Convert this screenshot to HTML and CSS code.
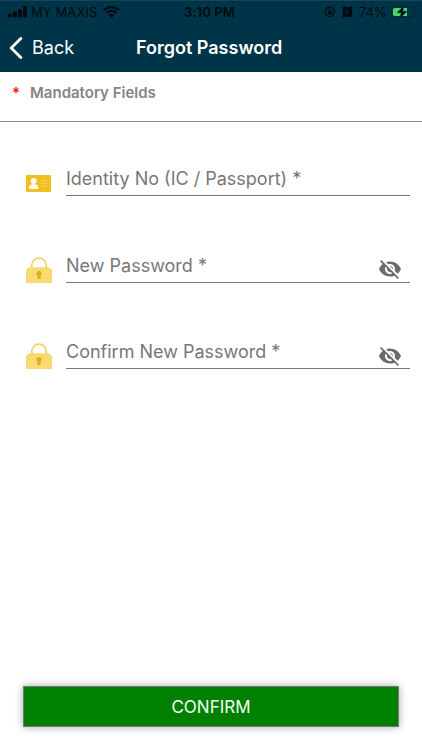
FILE: index.html
```html
<!DOCTYPE html>
<html lang="en">
<head>
<meta charset="utf-8">
<title>Forgot Password</title>
<link rel="stylesheet" href="styles.css">
</head>
<body>
<svg class="defs" width="0" height="0" aria-hidden="true">
  <symbol id="lock" viewBox="0 0 26 26">
    <path d="M5.8 12V8.3a7.2 7.2 0 0 1 14.4 0V12" fill="none" stroke="#efce58" stroke-width="1.5"/>
    <path d="M.5 25.5V15q0-4.2 4.3-4.2h16.4q4.3 0 4.3 4.2v10.500z" fill="#f8da70" stroke="#f3d263" stroke-width=".8"/>
    <path d="M13 14a2.700 2.700 0 0 0-1.500 4.900V22h3v-3.100A2.700 2.700 0 0 0 13 14z" fill="#dfae16"/>
  </symbol>
  <symbol id="eye-off" viewBox="0 0 24 24">
    <path d="M12 7c2.760 0 5 2.240 5 5 0 .65-.13 1.260-.36 1.830l2.920 2.920c1.510-1.260 2.700-2.890 3.430-4.750-1.730-4.390-6-7.500-11-7.500-1.400 0-2.740.25-3.980.7l2.160 2.160C10.740 7.130 11.350 7 12 7zM2 4.270l2.280 2.280.46.46C3.080 8.300 1.780 10.020 1 12c1.730 4.390 6 7.500 11 7.500 1.550 0 3.030-.3 4.380-.84l.42.42L19.730 22 21 20.730 3.270 3 2 4.270zM7.530 9.800l1.550 1.550c-.05.21-.08.43-.08.65 0 1.660 1.340 3 3 3 .22 0 .44-.03.65-.08l1.550 1.550c-.67.33-1.410.53-2.200.53-2.760 0-5-2.240-5-5 0-.79.2-1.530.53-2.200zm4.310-.78l3.150 3.150.02-.16c0-1.660-1.340-3-3-3l-.17.01z" fill="#6b6b6b"/>
  </symbol>
</svg>
<div class="screen">
  <header class="header">
    <div class="status">
      <svg class="signal" width="19" height="12" viewBox="0 0 19 12"><rect y="7.500" width="4" height="4" rx="1"/><rect x="5" y="5.500" width="4" height="6" rx="1"/><rect x="10" y="3" width="4" height="8.500" rx="1"/><rect x="15" width="4" height="11.500" rx="1"/></svg>
      <span class="carrier">MY MAXIS</span>
      <svg class="wifi" width="17" height="12" viewBox="0 0 17 12"><path d="M1 4.100a10.800 10.800 0 0 1 15 0M3.700 6.900a6.900 6.900 0 0 1 9.600 0" fill="none" stroke="#010b10" stroke-width="2.200"/><path d="M5.700 9.100a4 4 0 0 1 5.600 0l-2.800 2.800z"/></svg>
      <span class="time">3:10 PM</span>
      <svg class="rotation" width="12" height="12" viewBox="0 0 12 12"><path d="M10.200 7.800a4.800 4.800 0 1 1 .4-2.400" fill="none" stroke="#010b10" stroke-width="1.100"/><path d="M9 5.300h3l-1.500 2z"/><rect x="3.600" y="5.300" width="4.400" height="3.300" rx=".5"/><path d="M4.500 5.500V4.400a1.300 1.300 0 0 1 2.600 0v1.100" fill="none" stroke="#010b10" stroke-width=".8"/></svg>
      <svg class="alarm" width="11" height="12" viewBox="0 0 11 12"><path d="M.3 2.300Q1 .3 3 .3l1 .8h3l1-.8q2 0 2.700 2L10 3.800v5l.8 2.200-.9.6-1-.8H2.100l-1 .8-.9-.6L1 8.800v-5z"/><path d="M5.700 3.300v3.200H3.300" fill="none" stroke="#003448" stroke-width=".9"/></svg>
      <span class="percent">74%</span>
      <svg class="battery" width="26" height="14" viewBox="0 0 26 14"><rect x=".5" y="1.500" width="22.500" height="11" rx="3" fill="none" stroke="#02212e"/><path d="M24.300 5q2 2 0 4z" fill="#02212e"/><path d="M3.800 3H16v8H3.800q-1.800 0-1.800-1.800V4.800Q2 3 3.800 3z" fill="#4fd46b"/><path d="M13.200.5 6 7.800h4.300L8.500 13.500l7.700-7.300h-4.500z" stroke="#003448" stroke-width=".5"/></svg>
    </div>
    <div class="navbar">
      <a class="back"><svg width="14" height="22" viewBox="0 0 14 22"><path d="M11.800 1.500 2.200 11l9.600 9.500" fill="none" stroke="#fff" stroke-width="2.800" stroke-linecap="round" stroke-linejoin="round"/></svg><span>Back</span></a>
      <h1 class="title">Forgot Password</h1>
    </div>
  </header>
  <div class="mandatory"><span class="star">*</span><span class="note">Mandatory Fields</span></div>
  <main class="form">
    <div class="field">
      <svg class="id-card" width="25" height="17" viewBox="0 0 25 17"><rect width="25" height="17" rx="1.200" fill="#efc01d"/><circle cx="7.700" cy="6" r="2.900" fill="#fff"/><path d="M2.800 14q0-4.700 3.700-4.700h2.400q3.700 0 3.700 4.700z" fill="#fff"/><path d="M15 5.800h6.500M15 8.600h6.500M15 11.400h6.500" stroke="#f7d666" stroke-width=".8"/></svg>
      <div class="input"><span class="label identity">Identity No (IC / Passport) *</span></div>
    </div>
    <div class="field">
      <svg class="lock" width="26" height="26"><use href="#lock"/></svg>
      <div class="input"><span class="label new">New Password *</span><svg class="eye" width="24" height="24"><use href="#eye-off"/></svg></div>
    </div>
    <div class="field">
      <svg class="lock" width="26" height="26"><use href="#lock"/></svg>
      <div class="input"><span class="label confirm-label">Confirm New Password *</span><svg class="eye" width="24" height="24"><use href="#eye-off"/></svg></div>
    </div>
  </main>
  <button class="confirm">CONFIRM</button>
</div>
</body>
</html>
```
FILE: styles.css
```css
* { box-sizing: border-box; }
body { margin: 0; background: #fff; font-family: Inter, "Liberation Sans", sans-serif; }
.defs { display: none; }
.screen { width: 422px; height: 750px; display: flex; flex-direction: column; overflow: hidden; }
.header { height: 72px; background: #003448; color: #fff; border-top: 1px solid #174557; flex: none; }
.status { height: 22px; display: flex; align-items: center; padding-left: 8px; color: #010b10; font-size: 13px; line-height: 22px; white-space: nowrap; }
.status svg { fill: #010b10; flex: none; }
.carrier { width: 67px; margin-left: 4px; letter-spacing: .1px; }
.wifi { margin-left: 5px; }
.time { width: 54px; margin-left: 64px; font-weight: 600; letter-spacing: .1px; }
.rotation { margin-left: 86px; }
.alarm { margin-left: 6px; }
.percent { width: 27px; margin-left: 6px; }
.battery { margin-left: 5px; }
.navbar { height: 49px; display: grid; grid-template-columns: 136px 1fr; align-items: center; }
.back { display: flex; align-items: center; padding-left: 9px; gap: 9px; font-size: 18px; }
.title { margin: 0; font-size: 18px; font-weight: 600; white-space: nowrap; }
.mandatory { height: 50px; flex: none; display: flex; padding: 10px 0 0 12px; border-bottom: 1px solid #8e8e8e; line-height: 22px; font-size: 15px; font-weight: 600; }
.star { width: 18px; color: #f21616; }
.note { color: #858585; }
.form { padding: 38px 12px 0 26px; flex: 1; }
.field { height: 36px; margin-bottom: 50.5px; display: grid; grid-template-columns: 40px 1fr; align-items: end; }
.id-card { margin-bottom: 4px; }
.lock { margin-bottom: 0; }
.input { height: 36px; border-bottom: 1px solid #777; display: flex; align-items: center; justify-content: space-between; }
.label { color: #777; font-size: 18px; line-height: 24px; padding-top: 3px; white-space: nowrap; }
.eye { margin: 10px 8px 0 0; }
.confirm { width: 376px; height: 41px; margin: 0 23px 23px; padding: 0; flex: none; background: #008000; border: 1px solid #777; box-shadow: 0 0 8px rgba(0,0,0,.35); color: #f4fff4; font: 17px Inter, "Liberation Sans", sans-serif; }
```
